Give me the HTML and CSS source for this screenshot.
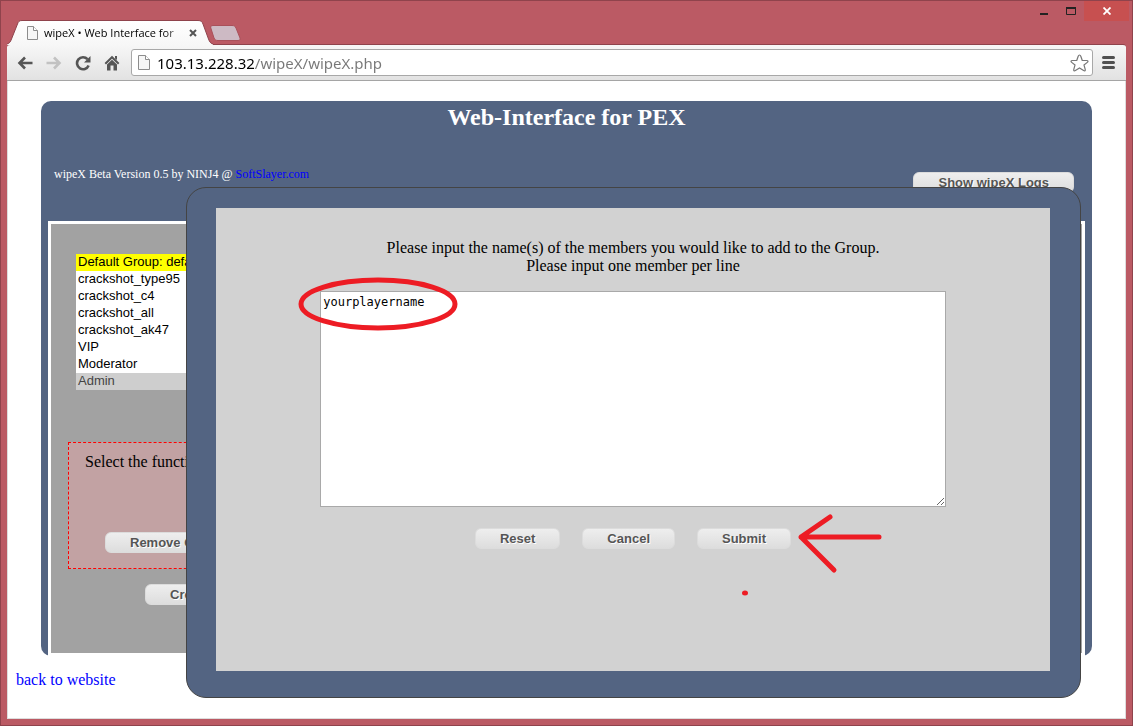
FILE: index.html
```html
<!DOCTYPE html>
<html lang="en">
<head>
    <meta charset="UTF-8">
    <title>wipeX • Web Interface for PEX</title>
    <link rel="stylesheet" href="styles.css">
</head>
<body>
    <div class="window">
        <header class="titlebar">
            <div class="tab">
                <svg class="tab-shape" width="206" height="25" viewBox="0 0 206 25">
                    <defs>
                        <linearGradient id="tabFill" x1="0" y1="0" x2="0" y2="1">
                            <stop offset="0" stop-color="#ffffff"/>
                            <stop offset="1" stop-color="#f7f7f7"/>
                        </linearGradient>
                    </defs>
                    <path d="M0 25V24C2 24 3.500 22 4.500 19L10.500 4C11.500 1.500 12 .5 15 .5H191C194 .5 195 1.500 196 4L201.500 19C202.500 22 204 24 206 24V25Z" fill="url(#tabFill)"/>
                    <path d="M0 24C2 23.500 3.500 22 4.500 19L10.500 4C11.500 1.500 12 .5 15 .5H191C194 .5 195 1.500 196 4L201.500 19C202.500 22 204 23.500 206 24" fill="none" stroke="#8f434c"/>
                </svg>
                <svg class="page-icon" width="11" height="14" viewBox="0 0 11 14">
                    <path d="M.5.5H6.500L10.500 4.500V13.500H.5Z" fill="#f6f6f6" stroke="#8c8c8c"/>
                    <path d="M6.500.5V4.500H10.500" fill="#fff" stroke="#8c8c8c"/>
                </svg>
                <span class="tab-title">wipeX • Web Interface for</span>
                <button class="tab-close" aria-label="Close tab">
                    <svg width="8" height="8" viewBox="0 0 8 8"><path d="M1 1L7 7M7 1L1 7" stroke="#555" stroke-width="2"/></svg>
                </button>
            </div>
            <button class="new-tab" aria-label="New tab">
                <svg width="31" height="16" viewBox="0 0 31 16"><path d="M3 .5H22C24 .5 25 1 26 3L30 13C30.500 14.500 30 15.500 28 15.500H8C6 15.500 5 15 4 13L.8 3C.3 1.500 1 .5 3 .5Z" fill="#cdbac4" stroke="#a9505a"/></svg>
            </button>
            <div class="window-controls">
                <button class="control" aria-label="Minimize">
                    <svg width="8" height="10" viewBox="0 0 8 10"><path d="M0 8H8" stroke="#222" stroke-width="2"/></svg>
                </button>
                <button class="control" aria-label="Maximize">
                    <svg width="10" height="8" viewBox="0 0 10 8"><path d="M0 1H10" stroke="#222" stroke-width="2"/><path d="M.5 0V7.500H9.500V0" fill="none" stroke="#222"/></svg>
                </button>
                <button class="control control-close" aria-label="Close">
                    <svg width="8" height="8" viewBox="0 0 8 8"><path d="M.5.5L7.500 7.500M7.500.5L.5 7.500" stroke="#fff" stroke-width="1.800"/></svg>
                </button>
            </div>
        </header>

        <nav class="toolbar">
            <button class="tool" aria-label="Back">
                <svg width="16" height="14" viewBox="0 0 16 14"><path d="M8 1.500L2.500 7L8 12.500M3 7H15.500" fill="none" stroke="#555" stroke-width="2.600"/></svg>
            </button>
            <button class="tool" aria-label="Forward">
                <svg width="16" height="14" viewBox="0 0 16 14"><path d="M8 1.500L13.500 7L8 12.500M13 7H.5" fill="none" stroke="#c2c2c2" stroke-width="2.600"/></svg>
            </button>
            <button class="tool" aria-label="Reload">
                <svg width="16" height="16" viewBox="0 0 16 16"><path d="M12.500 4.200A6 6 0 1 0 13.600 10.500" fill="none" stroke="#555" stroke-width="2.600"/><path d="M15.500 1V7.500H9Z" fill="#555"/></svg>
            </button>
            <button class="tool" aria-label="Home">
                <svg width="16" height="16" viewBox="0 0 16 16"><path d="M1.300 8.800L8 2.200L14.700 8.800" fill="none" stroke="#555" stroke-width="2"/><path d="M3 9.500L8 4.800L13 9.500V15.500H9.500V10.500H6.500V15.500H3ZM11 1H13V5L11 3.500Z" fill="#555"/></svg>
            </button>
            <div class="address">
                <svg class="page-icon" width="12" height="15" viewBox="0 0 12 15">
                    <path d="M.5.5H7.500L11.500 4.500V14.500H.5Z" fill="#f6f6f6" stroke="#8c8c8c"/>
                    <path d="M7.500.5V4.500H11.500" fill="#fff" stroke="#8c8c8c"/>
                </svg>
                <input class="address-input" type="text" aria-label="Address" value="103.13.228.32/wipeX/wipeX.php">
                <button class="star" aria-label="Bookmark">
                    <svg width="19" height="18" viewBox="0 0 19 18"><path d="M9.500 1C10.200 1 10.500 1.500 10.800 2.300L12.200 6.300L16.700 6.500C18.200 6.600 18.400 7.500 17.300 8.400L14 11L15.200 15.300C15.600 16.700 14.800 17.300 13.600 16.500L9.500 14L5.400 16.500C4.200 17.300 3.400 16.700 3.800 15.300L5 11L1.700 8.400C.6 7.500.8 6.600 2.300 6.500L6.800 6.300L8.200 2.300C8.500 1.500 8.800 1 9.500 1Z" fill="#fff" stroke="#777" stroke-width="1.200"/></svg>
                </button>
            </div>
            <button class="tool menu" aria-label="Menu">
                <svg width="13" height="13" viewBox="0 0 13 13"><path d="M1.500 1.500H11.500M1.500 6.500H11.500M1.500 11.500H11.500" stroke="#505050" stroke-width="3" stroke-linecap="round"/></svg>
            </button>
        </nav>

        <main class="page">
            <div class="wrapper">
                <h1 class="title">Web-Interface for PEX</h1>
                <div class="info">
                    <p class="version">wipeX Beta Version 0.5 by NINJ4 @ <a href="#">SoftSlayer.com</a></p>
                    <button class="btn">Show wipeX Logs</button>
                </div>
                <div class="panel">
                    <div class="groups">
                        <select class="group-list" size="8" aria-label="Groups">
                            <option class="default-group">Default Group: default</option>
                            <option>crackshot_type95</option>
                            <option>crackshot_c4</option>
                            <option>crackshot_all</option>
                            <option>crackshot_ak47</option>
                            <option>VIP</option>
                            <option>Moderator</option>
                            <option selected>Admin</option>
                        </select>
                        <div class="functions">
                            <p class="functions-text">Select the function</p>
                            <button class="btn">Remove Group</button>
                        </div>
                        <button class="btn create-btn">Create Group</button>
                    </div>
                </div>
            </div>
            <a class="back" href="#">back to website</a>

            <div class="modal" role="dialog" aria-label="Add members">
                <form class="modal-body">
                    <label class="modal-text" for="members">Please input the name(s) of the members you would like to add to the Group.<br>Please input one member per line</label>
                    <textarea class="members" id="members" spellcheck="false">yourplayername</textarea>
                    <div class="actions">
                        <button class="btn" type="reset">Reset</button>
                        <button class="btn" type="button">Cancel</button>
                        <button class="btn" type="submit">Submit</button>
                    </div>
                </form>
                <!-- red hand-drawn marks -->
                <svg class="marks" width="893" height="509" viewBox="0 0 893 509" fill="none" stroke="#ed1c24" stroke-width="5" stroke-linecap="round" stroke-linejoin="round">
                    <ellipse cx="191" cy="116" rx="77" ry="24"/>
                    <path d="M692 349H614L643 329M614 349L647 382"/>
                    <ellipse cx="558" cy="405" rx="3" ry="2.500" fill="#ed1c24" stroke="none"/>
                </svg>
            </div>
        </main>
    </div>
</body>
</html>
```

FILE: styles.css
```css
* {
    box-sizing: border-box;
}
body {
    margin: 0;
    font-family: "Liberation Serif", serif;
    font-size: 16px;
    color: #000;
}
button {
    font-family: inherit;
    cursor: pointer;
}
h1, p {
    margin: 0;
}
a {
    color: #0000ff;
    text-decoration: none;
}

/* browser window */
.window {
    display: flex;
    flex-direction: column;
    min-height: 100vh;
    padding: 0 6px 6px;
    background-color: #bb5a64;
    border: 1px solid #8f434c;
}
.titlebar {
    display: flex;
    align-items: flex-end;
    height: 43px;
}
.tab {
    position: relative;
    z-index: 1;
    display: flex;
    align-items: center;
    width: 206px;
    height: 25px;
    padding: 0 12px 0 20px;
    margin-bottom: -1px;
}
.tab-shape {
    position: absolute;
    left: 0;
    top: 0;
}
.page-icon {
    position: relative;
    flex-shrink: 0;
}
.tab-title {
    position: relative;
    flex: 1;
    margin-left: 6px;
    white-space: nowrap;
    font-family: "Open Sans", sans-serif;
    font-size: 11px;
    line-height: 20px;
    -webkit-mask-image: linear-gradient(90deg, #000 85%, transparent 105%);
    mask-image: linear-gradient(90deg, #000 85%, transparent 105%);
}
.tab-close, .new-tab, .tool, .star, .control {
    display: flex;
    align-items: center;
    justify-content: center;
    padding: 0;
    background: none;
    border: none;
}
.tab-close {
    position: relative;
    width: 16px;
    height: 16px;
}
.new-tab {
    height: 16px;
    margin: 0 0 3px -3px;
}
.window-controls {
    display: flex;
    align-self: flex-start;
    margin-left: auto;
    margin-right: -3px;
}
.control {
    width: 27px;
    height: 20px;
}
.control-close {
    width: 45px;
    background-color: #c75050;
}
.toolbar {
    display: flex;
    align-items: center;
    height: 37px;
    padding: 0 10px;
    background: linear-gradient(#f7f7f7, #e2e2e2);
    border-top: 1px solid #8f434c;
    border-bottom: 1px solid #a5a5a5;
    border-radius: 3px 3px 0 0;
}
.tool {
    width: 16px;
    height: 24px;
    margin-right: 13px;
}
.address {
    display: flex;
    flex: 1;
    align-items: center;
    height: 27px;
    padding: 0 3px 0 6px;
    margin-left: -2px;
    background-color: #fff;
    border: 1px solid #a8a8a8;
    border-radius: 3px;
}
.address-input {
    flex: 1;
    height: 25px;
    padding: 0;
    margin-left: 7px;
    border: none;
    outline: none;
    font-family: "Noto Sans", sans-serif;
    font-size: 15px;
    /* host in black, the path in grey */
    color: transparent;
    background: linear-gradient(90deg, #000 98px, #777 98px);
    -webkit-background-clip: text;
    background-clip: text;
}
.menu {
    margin: 0 0 0 7px;
}

/* page */
.page {
    position: relative;
    flex: 1;
    padding: 20px 33px 27px;
    background-color: #fff;
    border: 1px solid #ddd;
    border-top: none;
}
.wrapper {
    padding: 0 7px;
    background-color: #536482;
    border-radius: 10px;
}
.title {
    color: #fff;
    text-align: center;
    font-size: 24px;
    line-height: 32px;
}
.info {
    display: flex;
    justify-content: space-between;
    height: 88px;
    padding: 33px 11px 0 6px;
}
.version {
    color: #fff;
    font-size: 12px;
    line-height: 16px;
}
.info .btn {
    margin-top: 6px;
}
.btn {
    height: 21px;
    padding: 0 24px;
    background: linear-gradient(#eee, #ddd);
    border: 1px solid #dcdcdc;
    border-radius: 6px;
    color: #555;
    font-family: "Liberation Sans", sans-serif;
    font-size: 13px;
    font-weight: bold;
    line-height: 18px;
    white-space: nowrap;
    text-shadow: 1px 1px 0 #fff;
}
.panel {
    padding: 30px 17px 48px;
    background-color: #a2a2a2;
    border: 3px solid #fff;
}
.groups {
    display: flex;
    flex-direction: column;
    align-items: flex-start;
    width: 320px;
}
.group-list {
    width: 200px;
    height: 136px;
    padding: 0;
    margin-left: 8px;
    overflow: hidden;
    border: none;
    border-radius: 0;
    font-family: "Liberation Sans", sans-serif;
    font-size: 13px;
}
.group-list option {
    height: 17px;
    min-height: 17px;
    padding: 0 2px;
    line-height: 17px;
}
.group-list option:checked {
    color: #444;
}
.default-group {
    background-color: #ffff00;
}
.functions {
    width: 300px;
    height: 127px;
    padding: 10px 16px;
    margin-top: 52px;
    background-color: #c2a2a3;
    border: 1px dashed #ff0000;
}
.functions-text {
    margin-bottom: 61px;
    line-height: 18px;
}
.functions .btn {
    margin-left: 20px;
}
.create-btn {
    margin: 15px 0 0 77px;
}
.back {
    display: inline-block;
    margin: 15px 0 0 -25px;
    line-height: 18px;
}

/* add members box */
.modal {
    position: absolute;
    top: 106px;
    left: 178px;
    right: 44px;
    padding: 20px 30px 26px 29px;
    background-color: #536482;
    border: 1px solid #444;
    border-radius: 20px;
}
.modal-body {
    display: flex;
    flex-direction: column;
    align-items: center;
    height: 463px;
    padding-top: 31px;
    background-color: #d2d2d2;
}
.modal-text {
    text-align: center;
    line-height: 18px;
}
.members {
    width: 75%;
    height: 216px;
    padding: 2px;
    margin-top: 16px;
    border: 1px solid #a9a9a9;
    outline: none;
    font-family: "DejaVu Sans Mono", monospace;
    font-size: 12px;
    line-height: 16px;
}
.actions {
    display: flex;
    gap: 22px;
    margin-top: 21px;
}
.marks {
    position: absolute;
    top: 0;
    left: 0;
    pointer-events: none;
}
```
